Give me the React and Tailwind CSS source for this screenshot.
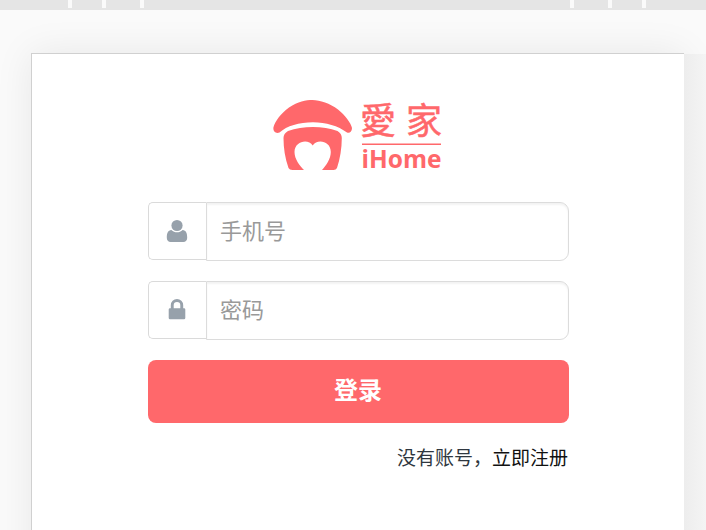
const tabs = ['w-[68px]', 'w-[30px]', 'w-[34px]', 'w-[426px]', 'w-[34px]', 'w-[30px]', 'w-[60px]'];

function Toolbar() {
  return (
    <div className="h-[10px] shrink-0 bg-[#e5e5e5]">
      <div className="flex h-2 gap-1 bg-[#fafafa]">
        {tabs.map((width, i) => (
          <div key={i} className={`${width} shrink-0 bg-[#e5e5e5]`} />
        ))}
      </div>
    </div>
  );
}

function Logo() {
  return (
    <svg className="ml-[124px] block h-[76px] w-[176px] overflow-visible" viewBox="0 0 176 76" fill="#ff686b" role="img" aria-label="愛家 iHome">
      <path d="M1.4 31.5 C3 25 9 17.5 17 11.5 C26 5.5 34 4 40.5 4 C48 4 58 7.5 66 13.5 C73 19 79 27 80 32 C80 36 77.5 37.3 75 36.5 C66 30 54 26.3 41 26.3 C27 26.3 15 30 7.5 36.5 C4 38 1 35.5 1.4 31.5Z" />
      <path d="M11.5 42 Q11.5 37.5 16 35 C31 29.6 51 29.6 65.5 35 Q69.8 37.5 69.8 42 C69.8 52 68 63 65 72 Q64 74 61.5 74 H50 C54 69.5 58.8 63 58.8 56 C58.8 44.8 45 42.5 40.7 49.5 C36.5 42.5 22.7 44.8 22.5 56 C22.5 63 27.5 69.5 32 74 H20.5 Q17.5 74 16.5 72 C13 62 11.5 52 11.5 42Z" />
      <g fontFamily='"Noto Sans CJK TC", sans-serif' fontSize="36" stroke="#ff686b" strokeWidth="0.5">
        <text x="88" y="37.5">愛</text>
        <text x="134" y="37.5">家</text>
      </g>
      <rect x="90" y="47.5" width="79" height="1.5" />
      <text x="89.5" y="71.5" fontFamily='"Open Sans", sans-serif' fontWeight="700" fontSize="25" textLength="80" lengthAdjust="spacingAndGlyphs">iHome</text>
    </svg>
  );
}

function UserIcon() {
  return (
    <svg className="mr-[2px] h-[24px] w-[22px]" viewBox="0 0 22 24" fill="#97a1ab">
      <path d="M5.4 11 C2 11.2 .8 14 .8 18.7 C.8 21.3 2.2 23 4.7 23 H17.3 C19.8 23 21.2 21.3 21.2 18.7 C21.2 14 20 11.2 16.6 11 C15 12.5 13 13.3 11 13.3 C9 13.3 7 12.5 5.4 11Z" />
      <circle cx="11" cy="6.5" r="5.6" />
    </svg>
  );
}

function LockIcon() {
  return (
    <svg className="mr-[2px] h-[24px] w-[22px]" viewBox="0 0 22 24" fill="#97a1ab">
      <path fillRule="evenodd" d="M4.8 10.2 V7.2 A6.2 6.2 0 0 1 17.2 7.2 V10.2 H18 Q19.3 10.2 19.3 11.5 V20 Q19.3 21.3 18 21.3 H4 Q2.7 21.3 2.7 20 V11.5 Q2.7 10.2 4 10.2Z M7.7 10.2 H14.3 V7.2 A3.3 3.3 0 0 0 7.7 7.2Z" />
    </svg>
  );
}

function Field({ icon, type, placeholder }) {
  return (
    <div className="flex h-[59px]">
      <div className="flex h-[58px] w-[58px] shrink-0 items-center justify-center rounded-l-[5px] border border-r-0 border-[#dadada]">
        {icon}
      </div>
      <input
        type={type}
        placeholder={placeholder}
        className="h-[59px] w-0 grow rounded-r-[9px] border-[1.5px] border-[#dcdcdc] bg-white px-[13px] text-[22px] shadow-[inset_0_2px_2px_rgba(0,0,0,0.05)] outline-none placeholder:text-[#999]"
      />
    </div>
  );
}

export default function App() {
  return (
    <div
      className="flex h-[530px] w-[706px] flex-col overflow-hidden bg-[#fafafa]"
      style={{ fontFamily: '"Liberation Sans", "Noto Sans CJK SC", sans-serif' }}
    >
      <Toolbar />
      <div className="flex grow pt-[43px] pl-[31px]">
        <main className="h-[600px] w-[653px] shrink-0 border-t border-l border-[#d0d0d0] bg-white pt-[42px] pl-[116px] shadow-[0_0_36px_rgba(0,0,0,0.08)]">
          <Logo />
          <form className="mt-[30px] flex w-[421px] flex-col gap-5">
            <Field icon={<UserIcon />} type="text" placeholder="手机号" />
            <Field icon={<LockIcon />} type="password" placeholder="密码" />
            <button type="button" className="h-[63px] rounded-[8px] bg-[#ff686b] pr-px pb-[2px] text-[24px] font-bold text-white">
              登录
            </button>
            <p className="-mt-px pr-px text-right text-[19px] leading-[34px] text-[#2f3740]">
              没有账号，<a className="text-[#111]">立即注册</a>
            </p>
          </form>
        </main>
        <div className="mt-px h-[600px] w-[22px] shrink-0 bg-linear-to-r from-[#ededed] to-[#f4f4f4]" />
      </div>
    </div>
  );
}
